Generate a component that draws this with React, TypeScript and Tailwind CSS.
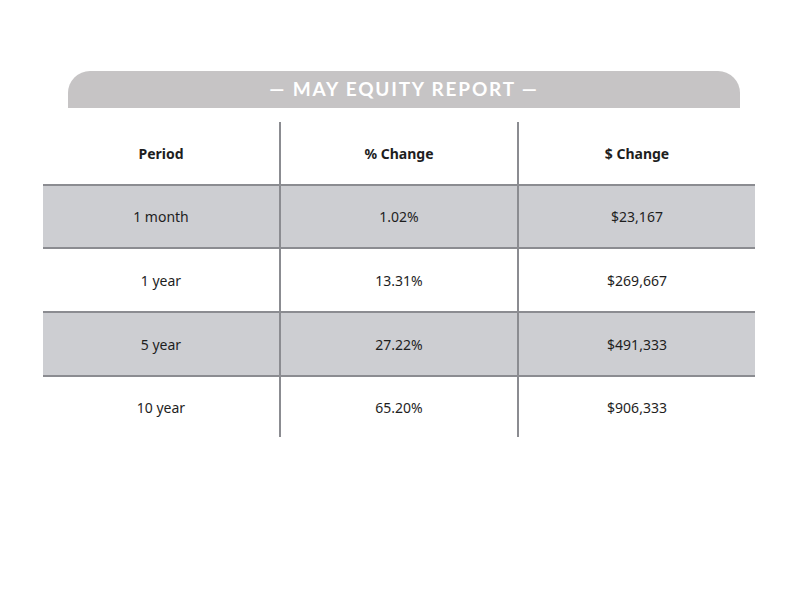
import React from 'react';

interface Row {
  period: string;
  pct: string;
  usd: string;
  shaded: boolean;
  height: string;
}

const rows: Row[] = [
  { period: '1 month', pct: '1.02%', usd: '$23,167', shaded: true, height: 'h-[63px]' },
  { period: '1 year', pct: '13.31%', usd: '$269,667', shaded: false, height: 'h-[64px]' },
  { period: '5 year', pct: '27.22%', usd: '$491,333', shaded: true, height: 'h-[64px]' },
  { period: '10 year', pct: '65.20%', usd: '$906,333', shaded: false, height: 'h-[60px]' },
];

function Cell({ children, last }: { children: React.ReactNode; last?: boolean }) {
  return (
    <div
      className={`flex items-center justify-center ${last ? 'w-[236px]' : 'w-[238px] border-r-2 border-[#8b8c91]'}`}
    >
      {children}
    </div>
  );
}

function App() {
  return (
    <div className="h-[600px] w-[800px] bg-white pt-[71px] font-['Noto_Sans',sans-serif] text-[#1e1e1e]">
      {/* Title bar */}
      <div className="ml-[68px] flex h-[37px] w-[672px] items-center justify-center rounded-t-[22px] bg-[#c6c4c5]">
        <h1 className="font-['Lato',sans-serif] text-[19px] font-bold tracking-[1.8px] text-white">
          — MAY EQUITY REPORT —
        </h1>
      </div>

      {/* Table */}
      <div className="ml-[43px] mt-[14px] w-[712px] text-[14px]">
        <div className="flex h-[64px] border-b-2 border-[#8b8c91] font-bold">
          <Cell>Period</Cell>
          <Cell>% Change</Cell>
          <Cell last>$ Change</Cell>
        </div>
        {rows.map((row, i) => (
          <div
            key={row.period}
            className={`flex ${row.height} ${row.shaded ? 'bg-[#cdced2]' : 'bg-white'} ${
              i < rows.length - 1 ? 'border-b-2 border-[#8b8c91]' : ''
            }`}
          >
            <Cell>{row.period}</Cell>
            <Cell>{row.pct}</Cell>
            <Cell last>{row.usd}</Cell>
          </div>
        ))}
      </div>
    </div>
  );
}

export default App;
